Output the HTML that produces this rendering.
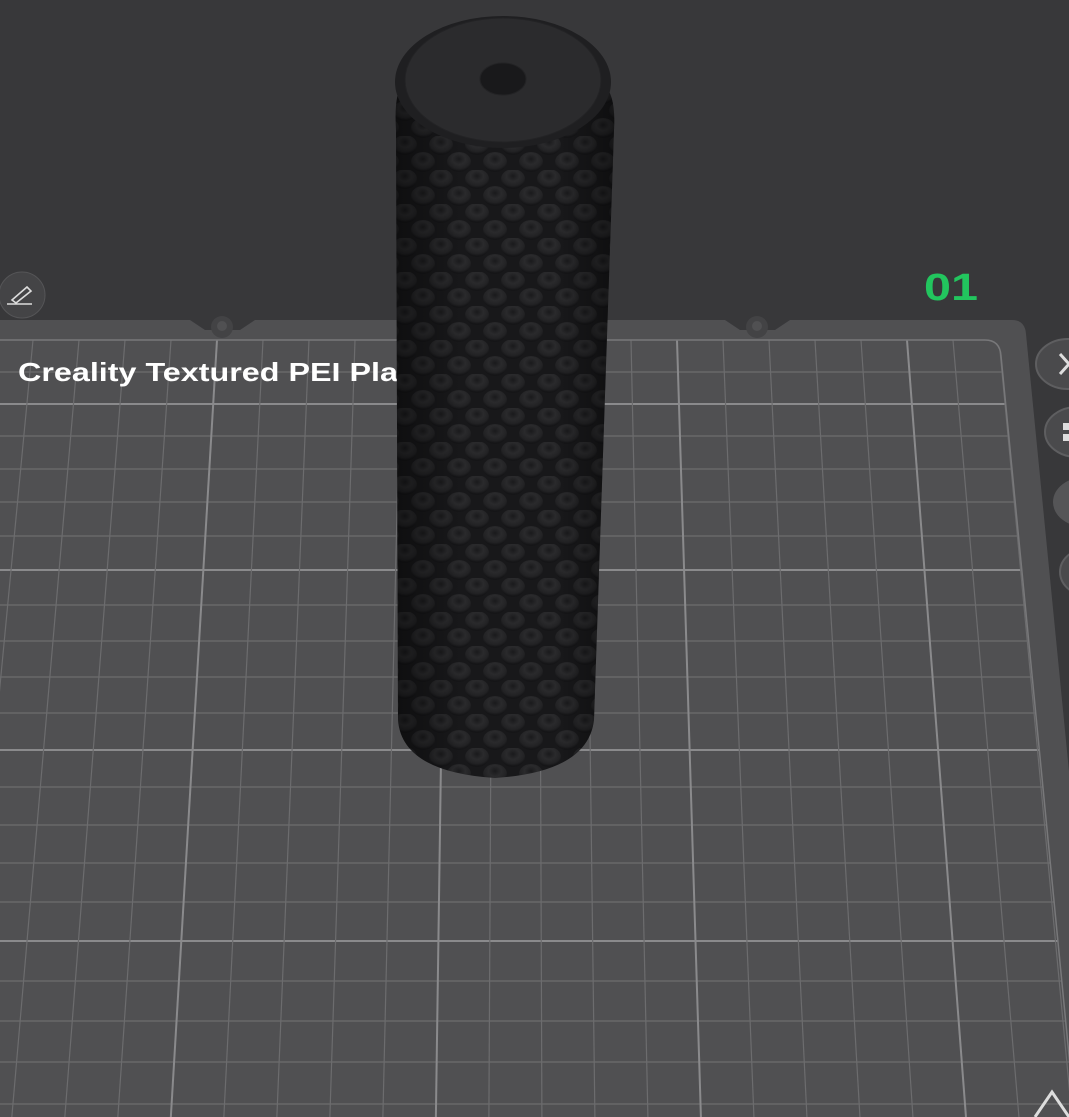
<!DOCTYPE html>
<html><head><meta charset="utf-8"><style>
html,body{margin:0;padding:0;background:#38383a;overflow:hidden}
svg{display:block}
</style></head><body>
<svg id="s" width="1069" height="1117" viewBox="0 0 1069 1117" xmlns="http://www.w3.org/2000/svg">
<defs>
<radialGradient id="bump" cx="0.5" cy="0.35" r="0.6">
<stop offset="0" stop-color="#1a1a1c"/>
<stop offset="0.45" stop-color="#2a2a2c"/>
<stop offset="0.8" stop-color="#222224"/>
<stop offset="1" stop-color="#151517"/>
</radialGradient>
<pattern id="tex" x="0" y="0" width="36" height="34" patternUnits="userSpaceOnUse">
<rect width="36" height="34" fill="#18181a"/>
<ellipse cx="9" cy="9" rx="12" ry="10" fill="url(#bump)"/>
<ellipse cx="27" cy="26" rx="12" ry="10" fill="url(#bump)"/>
<ellipse cx="27" cy="-8" rx="12" ry="10" fill="url(#bump)"/>
<ellipse cx="-9" cy="26" rx="12" ry="10" fill="url(#bump)"/>
<ellipse cx="45" cy="9" rx="12" ry="10" fill="url(#bump)"/>
</pattern>
<linearGradient id="shade" x1="0" x2="1" y1="0" y2="0">
<stop offset="0" stop-color="#000" stop-opacity="0.4"/>
<stop offset="0.3" stop-color="#000" stop-opacity="0"/>
<stop offset="0.75" stop-color="#000" stop-opacity="0"/>
<stop offset="1" stop-color="#000" stop-opacity="0.4"/>
</linearGradient>
<clipPath id="gc"><path d="M0 340 H985 Q1000 340 1001 356 L1075 1117 H0 Z"/></clipPath>
</defs>
<rect width="1069" height="1117" fill="#38383a"/>
<path d="M0 320 H190 L205 330 H240 L255 320 H725 L740 330 H775 L790 320 H1012 Q1025 320 1026 334 L1103 1117 H0 Z" fill="#505052"/>
<circle cx="222" cy="327" r="11" fill="#434345"/><circle cx="222" cy="326" r="5" fill="#505052"/>
<circle cx="757" cy="327" r="11" fill="#434345"/><circle cx="757" cy="326" r="5" fill="#505052"/>
<g id="grid" clip-path="url(#gc)" fill="none"></g>
<path d="M0 340 H985 Q1000 340 1001 356 L1075 1117" fill="none" stroke="#78787a" stroke-width="1.5"/>
<text x="18" y="381" font-family="Liberation Sans, sans-serif" font-weight="bold" font-size="26" fill="#fff" textLength="380" lengthAdjust="spacingAndGlyphs">Creality Textured PEI Pla</text>
<text x="924" y="300" font-family="Liberation Sans, sans-serif" font-weight="bold" font-size="38" fill="#22c55e" textLength="54" lengthAdjust="spacingAndGlyphs">01</text>
<circle cx="22" cy="295" r="23" fill="#444446" stroke="#555557"/>
<path d="M7 304 H32 M12 300 L27 287 L31 291 L16 303 Z" stroke="#dcdcdc" stroke-width="1.6" fill="none"/>
<ellipse cx="1068" cy="364" rx="32" ry="25" fill="#4a4a4c" stroke="#5e5e60" stroke-width="2"/>
<path d="M1060 354 L1069 364 L1060 374" stroke="#ddd" stroke-width="3" fill="none"/>
<ellipse cx="1077" cy="432" rx="32" ry="25" fill="#4a4a4c" stroke="#5e5e60" stroke-width="2"/>
<rect x="1063" y="423" width="7" height="7" fill="#ddd"/><rect x="1063" y="434" width="7" height="7" fill="#ddd"/>
<ellipse cx="1085" cy="502" rx="32" ry="25" fill="#555557"/>
<ellipse cx="1092" cy="572" rx="32" ry="25" fill="#4a4a4c" stroke="#5e5e60" stroke-width="2"/>
<path d="M1035 1117 L1052 1092 L1069 1117" stroke="#ddd" stroke-width="3" fill="none"/>
<path d="M402 85 Q394 95 396 130 L398 720 Q402 772 495 778 Q588 772 594 720 L614 130 Q616 95 604 85 Z" fill="url(#tex)"/>
<path d="M402 85 Q394 95 396 130 L398 720 Q402 772 495 778 Q588 772 594 720 L614 130 Q616 95 604 85 Z" fill="url(#shade)"/>
<ellipse cx="503" cy="82" rx="108" ry="66" fill="#1f1f21"/>
<ellipse cx="503" cy="80" rx="98" ry="62" fill="#2b2b2d" stroke="#232325"/>
<ellipse cx="503" cy="79" rx="23" ry="16" fill="#19191b" stroke="#232325"/>
</svg>
<script>
var g=document.getElementById('grid'),ns='http://www.w3.org/2000/svg';
function ln(x1,y1,x2,y2,c,w){var l=document.createElementNS(ns,'line');l.setAttribute('x1',x1);l.setAttribute('y1',y1);l.setAttribute('x2',x2);l.setAttribute('y2',y2);l.setAttribute('stroke',c);l.setAttribute('stroke-width',w);g.appendChild(l);}
var hy=[372,404,436,469,502,536,570,605,641,677,713,750,787,825,863,902,941,981,1021,1062,1104];
var maj=[404,570,750,941];
hy.forEach(function(y){var m=maj.indexOf(y)>=0;ln(0,y,1100,y,m?'#8a8a8c':'#6c6c6e',m?2:1.2);});
var cx=520,f=(1117+4760)/5100;
for(var k=-12;k<=12;k++){var x0=493+46*k;var m=((k%5)+5)%5===4;
var xb=cx+(x0-cx)*f;
ln(x0,340,xb,1117,m?'#8a8a8c':'#6c6c6e',m?2:1.2);}
</script>
</body></html>
